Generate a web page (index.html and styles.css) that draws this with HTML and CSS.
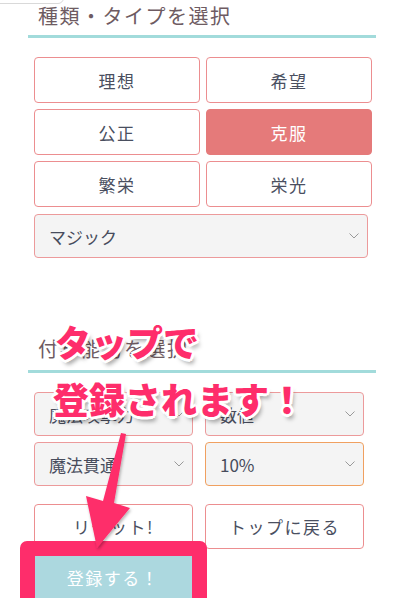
FILE: index.html
```html
<!DOCTYPE html>
<html lang="ja">
<head>
<meta charset="UTF-8">
<title>種類・タイプを選択</title>
<meta name="viewport" content="width=device-width, initial-scale=1.0">
<link rel="stylesheet" href="styles.css">
</head>
<body>

<div class="tipbox"></div>

<div class="page">
  <h2 class="heading">種類・タイプを選択</h2>
  <div class="typegrid">
    <button class="choice">理想</button>
    <button class="choice">希望</button>
    <button class="choice">公正</button>
    <button class="choice on">克服</button>
    <button class="choice">繁栄</button>
    <button class="choice">栄光</button>
  </div>
  <select class="pick wide">
    <option>マジック</option>
  </select>

  <h2 class="heading second">付与能力を選択</h2>
  <div class="pairgrid">
    <select class="pick"><option>魔法攻撃力</option></select>
    <select class="pick"><option>数値</option></select>
    <select class="pick"><option>魔法貫通</option></select>
    <select class="pick orange"><option>10%</option></select>
  </div>
  <div class="pairgrid actions">
    <button class="choice">リセット!</button>
    <button class="choice">トップに戻る</button>
  </div>
  <div class="savewrap">
    <button class="save">登録する！</button>
  </div>
</div>

<!-- annotation over the screenshot -->
<div class="note note1">タップで</div>
<div class="note note2">登録されます！</div>
<svg class="arrow" width="400" height="614" viewBox="0 0 400 614">
  <defs>
    <filter id="sh" x="-20%" y="-20%" width="140%" height="140%">
      <feDropShadow dx="1" dy="2" stdDeviation="1.5" flood-color="#000" flood-opacity="0.3"/>
    </filter>
  </defs>
  <polygon points="121,433 126,434 114,503 130,508 97,548 86,496 103,501" fill="#fe2d6b" filter="url(#sh)"/>
</svg>

</body>
</html>
```

FILE: styles.css
```css
body {
  margin: 0;
  background: #fff;
  font-family: "Noto Sans CJK JP", "Noto Sans", sans-serif;
  color: #4a4f5f;
}

.page {
  padding: 0 24px 0 28px;
}

.tipbox {
  position: absolute;
  left: -6px;
  top: -20px;
  width: 68px;
  height: 22px;
  border: 1px solid #d9d9d9;
  border-radius: 6px;
}

.heading {
  margin: 0;
  padding: 3px 0 6px 10px;
  font-size: 20px;
  line-height: 26px;
  font-weight: normal;
  letter-spacing: 1.5px;
  color: #6e5b62;
  border-bottom: 3px solid #a2dbdb;
}

.heading.second {
  margin-top: 78px;
  padding-top: 0;
  padding-bottom: 8px;
}

.typegrid {
  display: grid;
  grid-template-columns: 1fr 1fr;
  gap: 6px;
  margin: 19px 4px 0 6px;
}

.choice {
  height: 46px;
  background: #fff;
  border: 1px solid #ec8e90;
  border-radius: 4px;
  font-family: "Noto Sans CJK JP", sans-serif;
  font-size: 17px;
  letter-spacing: 1.5px;
  color: #4a4f5f;
  padding: 0;
}

.choice.on {
  background: #e57a7a;
  border-color: #e57a7a;
  color: #fff;
}

.pick {
  -webkit-appearance: none;
  appearance: none;
  display: block;
  width: 100%;
  height: 44px;
  padding: 0 0 0 14px;
  background: #f4f4f4 url("data:image/svg+xml,%3Csvg xmlns='http://www.w3.org/2000/svg' width='10' height='6' viewBox='0 0 10 6'%3E%3Cpath d='M0.5 0.5 L5 5 L9.5 0.5' fill='none' stroke='%23999' stroke-width='1'/%3E%3C/svg%3E") no-repeat right 8px center;
  border: 1px solid #ec9a9b;
  border-radius: 4px;
  font-family: "Noto Sans CJK JP", sans-serif;
  font-size: 17px;
  color: #474c5c;
  outline: none;
}

.pick.wide {
  width: 334px;
  margin: 7px 0 0 6px;
}

.pick.orange {
  border-color: #f0a060;
}

.pairgrid {
  display: grid;
  grid-template-columns: 159px 159px;
  column-gap: 12px;
  row-gap: 6px;
  margin: 19px 0 0 6px;
}

.actions {
  margin-top: 18px;
}

.actions .choice {
  height: 45px;
}

.savewrap {
  position: relative;
  width: 158px;
  margin: 7px 0 0 6px;
}

.savewrap::after {
  content: "";
  position: absolute;
  left: -14px;
  top: -15px;
  right: -15px;
  bottom: -15px;
  border: 15px solid #fe2d6b;
  border-radius: 7px;
}

.save {
  display: block;
  width: 158px;
  height: 42px;
  border: none;
  background: #acd8df;
  color: #fff;
  font-family: "Noto Sans CJK JP", sans-serif;
  font-size: 17px;
  letter-spacing: 1.5px;
  padding: 0;
}

.note {
  position: absolute;
  font-family: "Noto Sans CJK JP", sans-serif;
  font-weight: 900;
  font-size: 36px;
  line-height: 36px;
  color: #fe2d6b;
  white-space: nowrap;
  text-shadow:
    3px 0 0 #fff, -3px 0 0 #fff, 0 3px 0 #fff, 0 -3px 0 #fff,
    2px 2px 0 #fff, -2px 2px 0 #fff, 2px -2px 0 #fff, -2px -2px 0 #fff,
    3px 5px 4px rgba(0, 0, 0, 0.35);
}

.note1 {
  left: 55px;
  top: 323px;
}

.note2 {
  left: 53px;
  top: 380px;
}

.arrow {
  position: absolute;
  left: 0;
  top: 0;
  pointer-events: none;
}
```
